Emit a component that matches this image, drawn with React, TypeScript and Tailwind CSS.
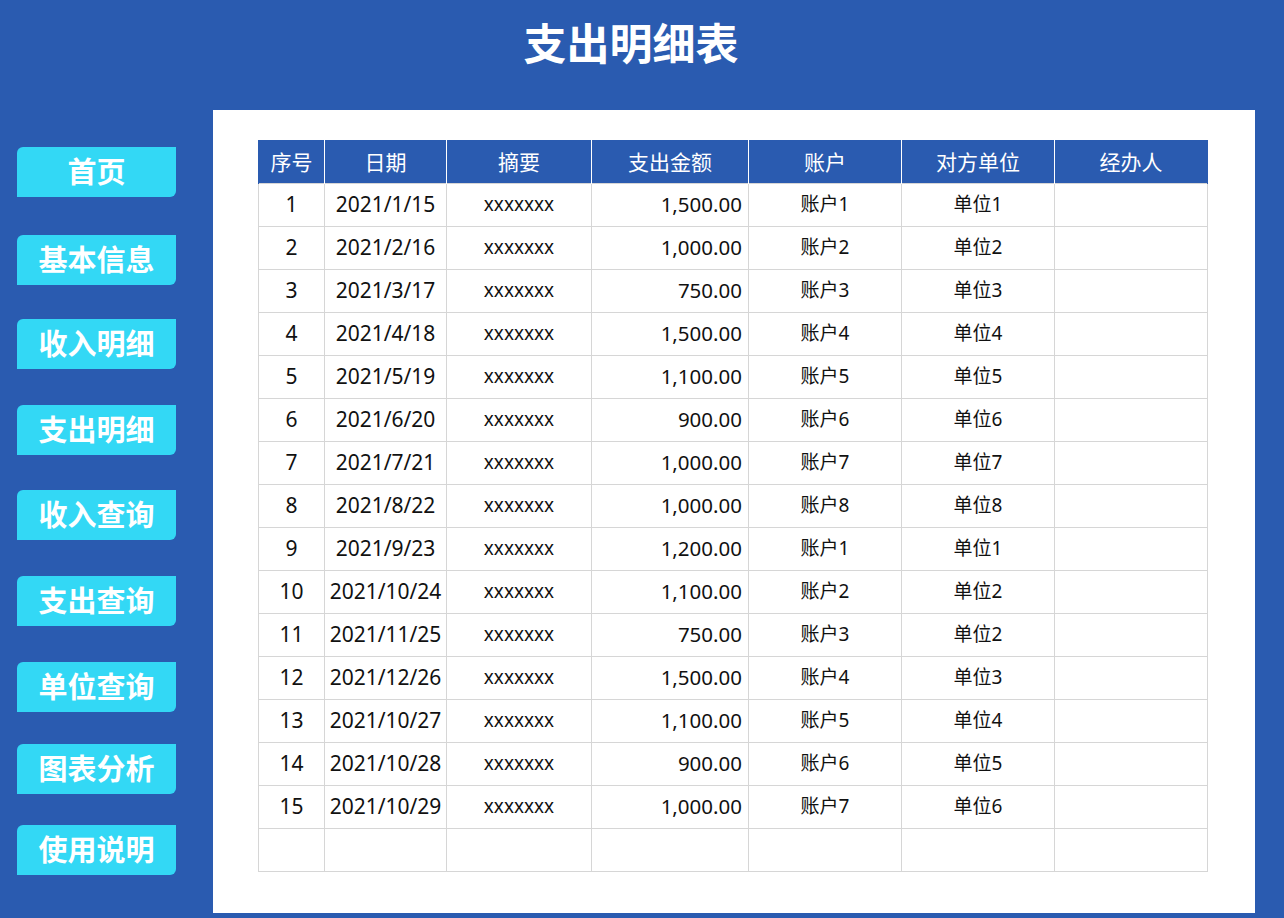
import React from "react";

const rows = [
  ["1", "2021/1/15", "1,500.00", "账户1", "单位1"],
  ["2", "2021/2/16", "1,000.00", "账户2", "单位2"],
  ["3", "2021/3/17", "750.00", "账户3", "单位3"],
  ["4", "2021/4/18", "1,500.00", "账户4", "单位4"],
  ["5", "2021/5/19", "1,100.00", "账户5", "单位5"],
  ["6", "2021/6/20", "900.00", "账户6", "单位6"],
  ["7", "2021/7/21", "1,000.00", "账户7", "单位7"],
  ["8", "2021/8/22", "1,000.00", "账户8", "单位8"],
  ["9", "2021/9/23", "1,200.00", "账户1", "单位1"],
  ["10", "2021/10/24", "1,100.00", "账户2", "单位2"],
  ["11", "2021/11/25", "750.00", "账户3", "单位2"],
  ["12", "2021/12/26", "1,500.00", "账户4", "单位3"],
  ["13", "2021/10/27", "1,100.00", "账户5", "单位4"],
  ["14", "2021/10/28", "900.00", "账户6", "单位5"],
  ["15", "2021/10/29", "1,000.00", "账户7", "单位6"],
];

const navs: [string, string][] = [
  ["首页", "mt-[37px]"],
  ["基本信息", "mt-[38px]"],
  ["收入明细", "mt-[34px]"],
  ["支出明细", "mt-[36px]"],
  ["收入查询", "mt-[35px]"],
  ["支出查询", "mt-[36px]"],
  ["单位查询", "mt-[36px]"],
  ["图表分析", "mt-[32px]"],
  ["使用说明", "mt-[31px]"],
];

const headers = ["序号", "日期", "摘要", "支出金额", "账户", "对方单位", "经办人"];
const widths = ["w-[66px]", "w-[122px]", "w-[145px]", "w-[157px]", "w-[153px]", "w-[153px]", "w-[153px]"];

export default function App() {
  return (
    <div
      className="w-[1284px] h-[918px] bg-[#2a5bb0] overflow-hidden flex flex-col"
      style={{ fontFamily: '"Noto Sans", "Noto Sans CJK SC", sans-serif' }}
    >
      <div className="h-[110px] flex justify-center pt-[13px] pr-[22px]">
        <h1
          className="text-[43px] leading-[56px] font-bold text-white"
          style={{ fontFamily: '"Noto Sans CJK SC", sans-serif' }}
        >
          支出明细表
        </h1>
      </div>
      <div className="flex">
        <div className="w-[213px] flex flex-col pl-[17px]">
          {navs.map(([t, mt]) => (
            <div
              key={t}
              className={`${mt} w-[159px] h-[50px] bg-[#33d8f5] rounded-tl-[6px] rounded-br-[6px] flex items-center justify-center pb-[2px] text-white text-[29px] font-bold`}
              style={{ fontFamily: '"Noto Sans CJK SC", sans-serif' }}
            >
              {t}
            </div>
          ))}
        </div>
        <div className="w-[1042px] h-[803px] bg-white pl-[45px] pt-[30px]">
          <table className="border-collapse w-[949px] table-fixed">
            <thead>
              <tr className="h-[43px]">
                {headers.map((h, i) => (
                  <th
                    key={h}
                    className={`${widths[i]} bg-[#2a5bb0] text-white font-normal text-[21px] border-x border-white first:border-l-[#2a5bb0] last:border-r-[#2a5bb0] p-0`}
                    style={{ fontFamily: '"Noto Sans CJK SC", sans-serif' }}
                  >
                    {h}
                  </th>
                ))}
              </tr>
            </thead>
            <tbody>
              {rows.map((r) => (
                <tr key={r[0]} className="h-[43px] text-[21px] text-[#111]">
                  <td className="border border-[#d6d6d6] text-center p-0">{r[0]}</td>
                  <td className="border border-[#d6d6d6] text-center p-0">{r[1]}</td>
                  <td className="border border-[#d6d6d6] text-center p-0 text-[19px]">xxxxxxx</td>
                  <td className="border border-[#d6d6d6] text-right pr-[6px] py-0 text-[20.5px]">{r[2]}</td>
                  <td className="border border-[#d6d6d6] text-center p-0 text-[19px]">{r[3]}</td>
                  <td className="border border-[#d6d6d6] text-center p-0 text-[19px]">{r[4]}</td>
                  <td className="border border-[#d6d6d6] p-0"></td>
                </tr>
              ))}
              <tr className="h-[43px]">
                {headers.map((h) => (
                  <td key={h} className="border border-[#d6d6d6] p-0"></td>
                ))}
              </tr>
            </tbody>
          </table>
        </div>
      </div>
    </div>
  );
}
